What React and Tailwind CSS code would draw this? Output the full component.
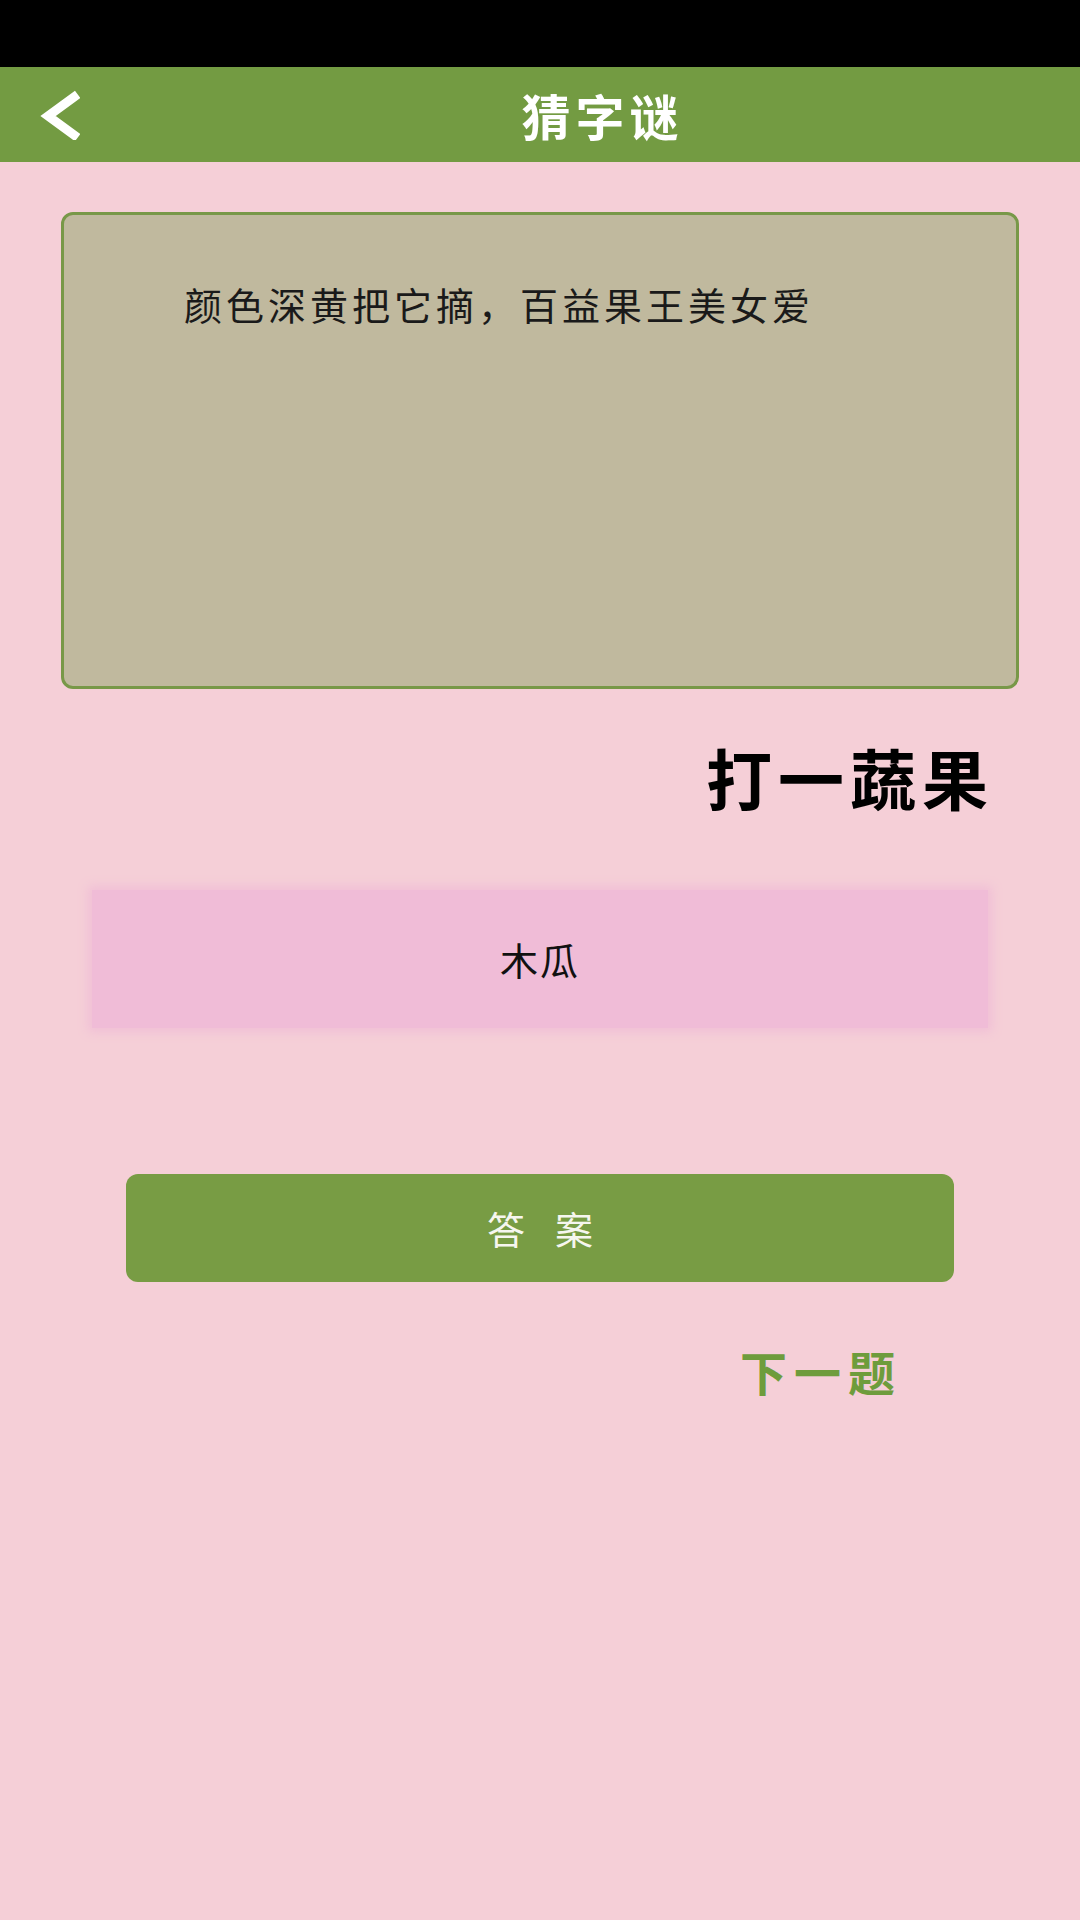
export default function App() {
  return (
    <div
      className="min-h-[1920px] w-[1080px] bg-[#f5cfd7] flex flex-col"
      style={{ fontFamily: '"Noto Sans CJK SC", "Noto Sans", sans-serif' }}
    >
      {/* status bar */}
      <div className="h-[67px] bg-black" />

      {/* header */}
      <header className="h-[95px] bg-[#739b42] flex items-center">
        <div className="w-[120px] pl-[40px] flex items-center">
          <svg width="40" height="50" viewBox="0 0 40 50" fill="none">
            <polyline
              points="34,7 8,26 34,45"
              stroke="white"
              strokeWidth="9"
              strokeLinecap="square"
              strokeLinejoin="miter"
            />
          </svg>
        </div>
        <h1 className="flex-1 text-center text-white font-bold text-[49px] tracking-[5px] pl-[5px] leading-none">猜字谜</h1>
      </header>

      {/* riddle */}
      <div className="mt-[50px] mx-[61px] h-[477px] rounded-[12px] border-[3px] border-[#789848] bg-[#c0b99e] pt-[70px] pl-[120px]">
        <p className="text-[38px] tracking-[4px] leading-none text-[#1a1a1a]">颜色深黄把它摘，百益果王美女爱</p>
      </div>

      {/* hint */}
      <div className="mt-[54px] pr-[86px] flex justify-end">
        <span className="text-[66px] tracking-[6px] font-bold leading-none text-black">打一蔬果</span>
      </div>

      {/* answer */}
      <div className="mt-[81px] ml-[92px] mr-[92px] h-[138px] bg-[#f0bcd7] shadow-[0_0_10px_4px_#f0bfd6] flex items-center justify-center">
        <span className="text-[38px] tracking-[2px] leading-none text-[#111]">木瓜</span>
      </div>

      {/* button */}
      <button className="mt-[146px] mx-[126px] h-[108px] rounded-[12px] bg-[#789c44] flex items-center justify-center">
        <span className="text-[38px] leading-none text-[#f6f6ef] tracking-[30px] pl-[30px]">答案</span>
      </button>

      {/* next */}
      <div className="mt-[65px] pr-[178px] flex justify-end">
        <span className="text-[47px] tracking-[7px] font-bold leading-none text-[#6e9c3c]">下一题</span>
      </div>
    </div>
  )
}
